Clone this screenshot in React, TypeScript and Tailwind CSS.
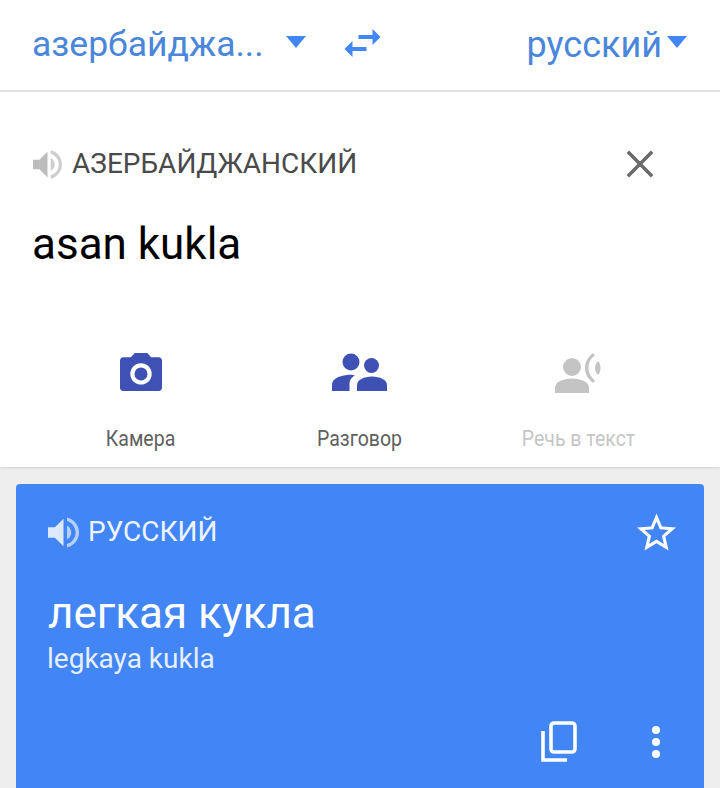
const font = { fontFamily: 'Roboto, "Noto Sans", sans-serif' };

const volumePaths = {
  cone: 'M3 9v6h4l5 5V4L7 9H3z',
  waves:
    'M16.5 12c0-1.77-1.02-3.29-2.5-4.03v8.05c1.48-.73 2.5-2.25 2.5-4.02zM14 3.23v2.06c2.89.86 5 3.54 5 6.71s-2.11 5.85-5 6.71v2.06c4.01-.91 7-4.49 7-8.77s-2.99-7.86-7-8.77z',
};

function Volume({ className }: { className: string }) {
  return (
    <svg viewBox="3 3 18 18" className={className} fill="currentColor">
      <path d={volumePaths.cone} />
      <path d={volumePaths.waves} opacity={0.75} />
    </svg>
  );
}

function Caret() {
  return (
    <svg width="20" height="14" viewBox="0 0 20 14" className="shrink-0 fill-[#4285f4]">
      <path d="M0 1h20L10 13z" />
    </svg>
  );
}

function ToolButton({ label, muted, children }: { label: string; muted?: boolean; children: React.ReactNode }) {
  return (
    <div className="flex w-[219px] flex-col items-center">
      <div className="flex h-[44px] items-center justify-center">{children}</div>
      <span className={`mt-[32px] scale-y-110 text-[19.5px] leading-[26px] ${muted ? 'text-[#c6c6c6]' : 'text-[#5f5f5f]'}`}>
        {label}
      </span>
    </div>
  );
}

export default function App() {
  return (
    <div className="flex h-[788px] w-[720px] flex-col overflow-hidden bg-[#eeeeee]" style={font}>
      {/* Language bar */}
      <header className="flex h-[92px] shrink-0 items-center border-b-2 border-[#e3e3e3] bg-white pl-[32px] pr-[33px] text-[#4a86da]">
        <span className="w-[230px] text-[35.5px] leading-none">азербайджа...</span>
        <span className="ml-[24px] -mt-[6px]">
          <Caret />
        </span>
        <svg viewBox="3 5 18 14" className="ml-[38px] -mt-[4px] h-[28px] w-[37px] fill-[#4285f4]">
          <path d="M6.99 11L3 15l3.99 4v-3H14v-2H6.99v-3zM21 9l-3.99-4v3H10v2h7.01v3L21 9z" />
        </svg>
        <span className="ml-auto text-[36px] leading-none">русский</span>
        <span className="ml-[5px] -mt-[6px]">
          <Caret />
        </span>
      </header>

      {/* Source text */}
      <section className="h-[375px] shrink-0 bg-white shadow-[0_1px_2px_rgba(0,0,0,0.12)]">
        <div className="flex items-center pl-[33px] pr-[66px] pt-[57px]">
          <Volume className="h-[29px] w-[29px] text-[#bdbdbd]" />
          <span className="ml-[10px] text-[28px] leading-[30px] text-[#4a4a4a]">АЗЕРБАЙДЖАНСКИЙ</span>
          <svg viewBox="0 0 30 30" className="ml-auto h-[28px] w-[28px]" stroke="#6b6b6b" strokeWidth="3.8">
            <path d="M2 2l26 26M28 2L2 28" />
          </svg>
        </div>
        <p className="ml-[32px] mt-[41px] text-[44px] leading-[48px] text-black">asan kukla</p>
        <div className="mt-[82px] flex px-[31px]">
          <ToolButton label="Камера">
            <svg viewBox="2 2 20 18" className="h-[38px] w-[42px]" fill="#3f51b5">
              <path
                fillRule="evenodd"
                d="M9 2L7.17 4H3.5C2.7 4 2 4.7 2 5.500v13c0 .8.7 1.500 1.500 1.500h17c.8 0 1.500-.7 1.500-1.500v-13c0-.8-.7-1.500-1.500-1.500h-3.670L15 2H9zm3 4.800a5.100 5.100 0 1 1 0 10.200 5.100 5.100 0 0 1 0-10.200zm0 2a3.100 3.100 0 1 0 0 6.200 3.100 3.100 0 0 0 0-6.200z"
              />
            </svg>
          </ToolButton>
          <ToolButton label="Разговор">
            <svg viewBox="0 0 55 39" className="h-[39px] w-[55px]" fill="#3f51b5">
              <circle cx="19" cy="9" r="8.500" />
              <circle cx="39.500" cy="12.500" r="7.500" />
              <path d="M0 38v-6c0-6 6-9 15-10 4-.4 6 0 8 .5-4 2-5.500 5-5.500 9V38H0z" />
              <path d="M25 38v-6c0-5 7-8.500 15-8.500S55 27 55 32v6H25z" />
            </svg>
          </ToolButton>
          <ToolButton label="Речь в текст" muted>
            <svg viewBox="0 0 50 41" className="h-[41px] w-[50px]" fill="#c4c4c4">
              <circle cx="18" cy="15" r="9" />
              <path d="M1 41v-5c0-6 8-9.500 17-9.500S35 30 35 36v5H1z" />
              <path d="M39 1c-5 4-8 9-8 15s3 11 8 15l2-2.500c-4-3.500-6.500-7.500-6.500-12.500S37 6 41 3.500L39 1z" />
              <path d="M44 9c-2 2-3 4.500-3 7s1 5 3 7c1.500-1.500 2.500-4 2.500-7S45.500 10.500 44 9z" />
            </svg>
          </ToolButton>
        </div>
      </section>

      {/* Translation card */}
      <section className="relative mx-[16px] mt-[17px] flex-1 rounded-t-[4px] bg-[#4285f4] pl-[32px] pr-[28px] text-white">
        <div className="flex items-center pt-[29px]">
          <Volume className="h-[31px] w-[31px] text-[#dbe8fd]" />
          <span className="ml-[9px] text-[28px] leading-[38px] text-[#eef4fe]">РУССКИЙ</span>
          <svg viewBox="2 2 20 19" className="ml-auto h-[38px] w-[39px]" fill="white">
            <path d="M22 9.24l-7.19-.62L12 2 9.19 8.63 2 9.24l5.46 4.73L5.82 21 12 17.27 18.18 21l-1.63-7.03L22 9.24zM12 15.4l-3.76 2.27 1-4.28-3.32-2.88 4.38-.38L12 6.1l1.71 4.04 4.38.38-3.32 2.88 1 4.28L12 15.4z" />
          </svg>
        </div>
        <p className="mt-[39px] text-[44px] leading-[46px]">легкая кукла</p>
        <p className="-ml-px mt-[8px] text-[28px] leading-[30px] text-[#e6effe]">legkaya kukla</p>
        <div className="mt-[47px] flex items-center justify-end">
          <svg viewBox="0 0 36 42" className="h-[42px] w-[36px]" fill="none" stroke="white" strokeWidth="3.6">
            <rect x="10" y="2" width="24" height="29" rx="3" />
            <path d="M2 10v29h24" />
          </svg>
          <div className="ml-[75px] mr-[16px] flex flex-col gap-[4px]">
            <span className="h-[8px] w-[8px] rounded-full bg-white" />
            <span className="h-[8px] w-[8px] rounded-full bg-white" />
            <span className="h-[8px] w-[8px] rounded-full bg-white" />
          </div>
        </div>
      </section>
    </div>
  );
}
